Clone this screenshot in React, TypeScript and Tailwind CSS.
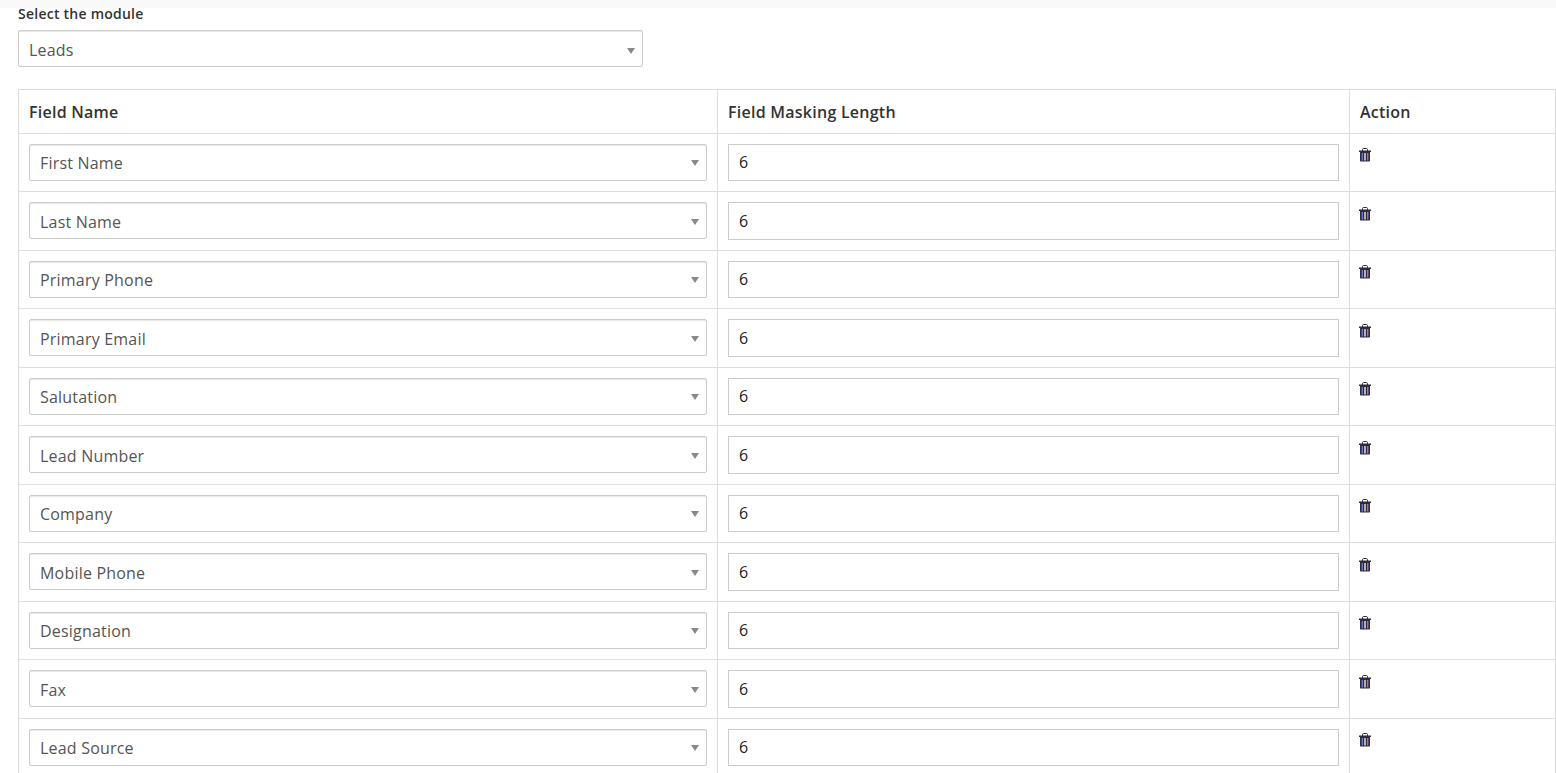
import React from "react";

const rows = ["First Name","Last Name","Primary Phone","Primary Email","Salutation","Lead Number","Company","Mobile Phone","Designation","Fax","Lead Source"];

function Trash() {
  return (
    <svg width="12" height="14" viewBox="0 0 12 14" className="block" aria-hidden="true">
      <path d="M3.5 3V1.5C3.5 1 3.9.5 4.5.5h3c.6 0 1 .5 1 1V3" fill="none" stroke="#2c2c3a" strokeWidth="1" />
      <rect x="0" y="2.5" width="12" height="1.5" fill="#2c2c3a" />
      <path d="M1 4h10v8.5c0 .6-.4 1-1 1H2c-.6 0-1-.4-1-1z" fill="#2c2c3a" />
      <rect x="2.6" y="5" width="1.4" height="7.5" fill="#6a78d0" />
      <rect x="5.3" y="5" width="1.4" height="7.5" fill="#ece8f4" />
      <rect x="8" y="5" width="1.4" height="7.5" fill="#b9708a" />
    </svg>
  );
}

function Select({ value, top }: { value: string; top?: boolean }) {
  return (
    <div className="relative h-[37px] border border-[#cccccc] rounded-[2px] shadow-[inset_0_1px_1px_rgba(0,0,0,0.1)] bg-white pl-[10px] pt-[2px] flex items-center text-[16px] tracking-[0.2px] text-[#555555]">
      {value}
      <span className={top ? "absolute right-[7px] top-[16.5px] w-0 h-0 border-x-[4px] border-x-transparent border-t-[6px] border-t-[#888888]" : "absolute right-[7px] top-[15.5px] w-0 h-0 border-x-[4px] border-x-transparent border-t-[6px] border-t-[#888888]"} />
    </div>
  );
}

export default function App() {
  return (
    <div className="h-[773px] overflow-hidden bg-white font-['Open_Sans',sans-serif]">
      <div className="h-2 bg-[#f9f9f9]" />
      <div className="pl-[18px] pr-px">
        <div className="mt-[-1px] h-[23px] leading-[14px] text-[14px] tracking-[0.24px] font-semibold text-[#333333]">Select the module</div>
        <div className="w-[625px]"><Select value="Leads" top /></div>
        <table className="mt-[22px] w-[1537px] table-fixed border-collapse text-[16px] text-[#333333]">
          <colgroup>
            <col className="w-[699px]" />
            <col className="w-[632px]" />
            <col className="w-[206px]" />
          </colgroup>
          <thead>
            <tr className="h-[43.5px]">
              <th className="border border-[#dddddd] px-[10px] pt-[1px] text-left font-semibold tracking-[0.25px]">Field Name</th>
              <th className="border border-[#dddddd] px-[10px] pt-[1px] text-left font-semibold tracking-[0.25px]">Field Masking Length</th>
              <th className="border border-[#dddddd] px-[10px] pt-[1px] text-left font-semibold tracking-[0.25px]">Action</th>
            </tr>
          </thead>
          <tbody>
            {rows.map((r) => (
              <tr key={r}>
                <td className="border border-[#dddddd] p-[10px] pb-[10.5px] align-top"><Select value={r} /></td>
                <td className="border border-[#dddddd] p-[10px] align-top">
                  <div className="h-[37.5px] border border-[#cccccc] bg-white pl-[10px] flex items-center text-[16px] text-[#222222]">6</div>
                </td>
                <td className="border border-[#dddddd] pl-[9px] pr-[10px] pt-[14.5px] align-top"><Trash /></td>
              </tr>
            ))}
          </tbody>
        </table>
      </div>
    </div>
  );
}
